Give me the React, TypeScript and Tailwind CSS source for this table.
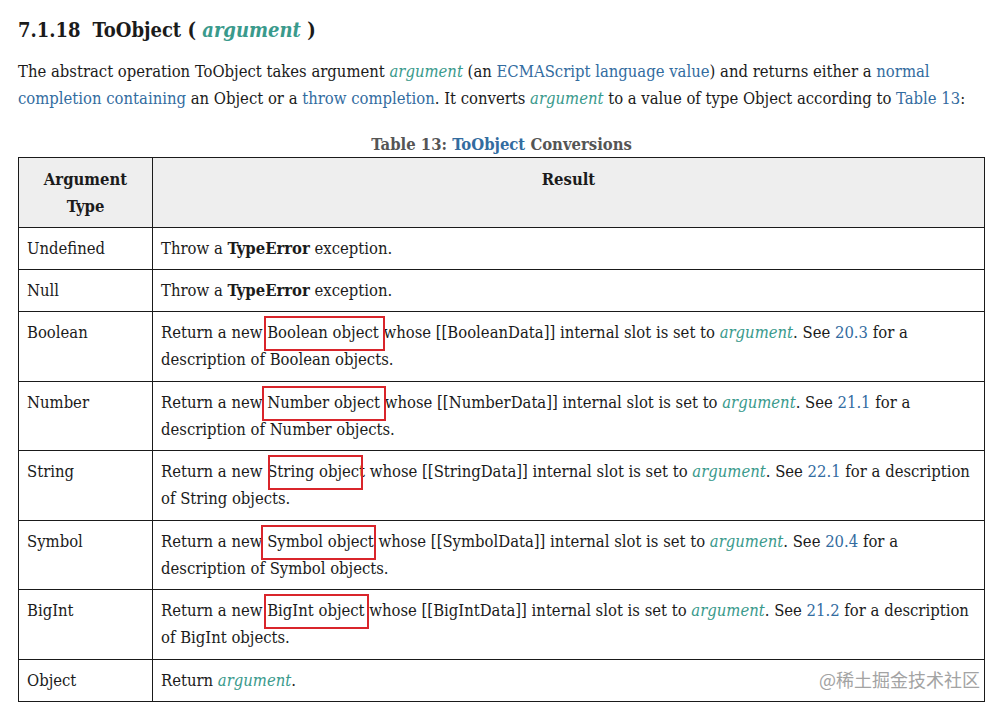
import React from 'react';

const serif = "font-['DejaVu_Serif_Condensed','Liberation_Serif',serif]";

function Arg() {
  return <i className="text-[#3a9a8c]">argument</i>;
}

function Ref({ children }: { children: React.ReactNode }) {
  return <span className="text-[#336c9f]">{children}</span>;
}

function Marked({ children, l = 3, r = 3 }: { children: React.ReactNode; l?: number; r?: number }) {
  return (
    <span className="relative">
      {children}
      <span
        className="pointer-events-none absolute top-[-7px] bottom-[-9px] border-2 border-[#d9252b]"
        style={{ left: -l, right: -r }}
      />
    </span>
  );
}

type Row = { type: string; lines: React.ReactNode[] };

function objRow(name: string, slot: string, see: string, wrapAfterDescription: boolean, l: number, r: number): Row {
  const first = (
    <>
      Return a new <Marked l={l} r={r}>{name} object</Marked> whose [[{slot}]] internal slot is set to <Arg />. See <Ref>{see}</Ref> for a
      {wrapAfterDescription ? ' description' : ''}
    </>
  );
  const second = wrapAfterDescription ? <>of {name} objects.</> : <>description of {name} objects.</>;
  return { type: name, lines: [first, second] };
}

const rows: Row[] = [
  { type: 'Undefined', lines: [<>Throw a <b>TypeError</b> exception.</>] },
  { type: 'Null', lines: [<>Throw a <b>TypeError</b> exception.</>] },
  objRow('Boolean', 'BooleanData', '20.3', false, 3, 6),
  objRow('Number', 'NumberData', '21.1', false, 5, 6),
  objRow('String', 'StringData', '22.1', true, -1, -2),
  objRow('Symbol', 'SymbolData', '20.4', false, 6, 2),
  objRow('BigInt', 'BigIntData', '21.2', true, 3, 4),
  { type: 'Object', lines: [<>Return <Arg />.</>] },
];

export default function App() {
  return (
    <div className={`relative min-h-[709px] w-[1000px] bg-white px-[18px] pt-[14px] text-[16.5px] text-[#1b1b1b] ${serif}`}>
      <h1 className="text-[20px] font-bold leading-[32px] whitespace-nowrap">
        7.1.18<span className="ml-[12px]">ToObject ( <Arg /> )</span>
      </h1>

      <p className="mt-[12px] leading-[27px] whitespace-nowrap">
        The abstract operation ToObject takes argument <Arg /> (an <Ref>ECMAScript language value</Ref>) and returns either a <Ref>normal</Ref>
        <br />
        <Ref>completion containing</Ref> an Object or a <Ref>throw completion</Ref>. It converts <Arg /> to a value of type Object according to <Ref>Table 13</Ref>:
      </p>

      <div className="mt-[22px] w-[967px] text-center font-bold leading-[22px] text-[#555]">
        Table 13: <span className="text-[#336c9f]">ToObject</span> Conversions
      </div>

      <table className="mt-px w-[967px] border-collapse border-[1.5px] border-[#1a1a1a] leading-[27px]">
        <thead>
          <tr className="bg-[#eeeeee]">
            <th className="w-[134px] border-[1.5px] border-[#1a1a1a] px-[8px] pt-[8px] pb-[7px] align-top font-bold">
              Argument
              <br />
              Type
            </th>
            <th className="border-[1.5px] border-[#1a1a1a] px-[8px] pt-[8px] align-top font-bold">Result</th>
          </tr>
        </thead>
        <tbody>
          {rows.map((row) => {
            const pad = row.lines.length > 1 ? 'pt-[7px] pb-[7.5px]' : 'pt-[7px] pb-[7px]';
            return (
              <tr key={row.type}>
                <td className={`border-[1.5px] border-[#1a1a1a] px-[8px] align-top whitespace-nowrap ${pad}`}>{row.type}</td>
                <td className={`border-[1.5px] border-[#1a1a1a] px-[8px] align-top whitespace-nowrap ${pad}`}>
                  {row.lines.map((line, i) => (
                    <div key={i}>{line}</div>
                  ))}
                </td>
              </tr>
            );
          })}
        </tbody>
      </table>

      <div className="absolute left-[819px] top-[666px] font-['Noto_Sans_CJK_SC',sans-serif] text-[18px] text-[#a3a3a3]">
        @稀土掘金技术社区
      </div>
    </div>
  );
}
